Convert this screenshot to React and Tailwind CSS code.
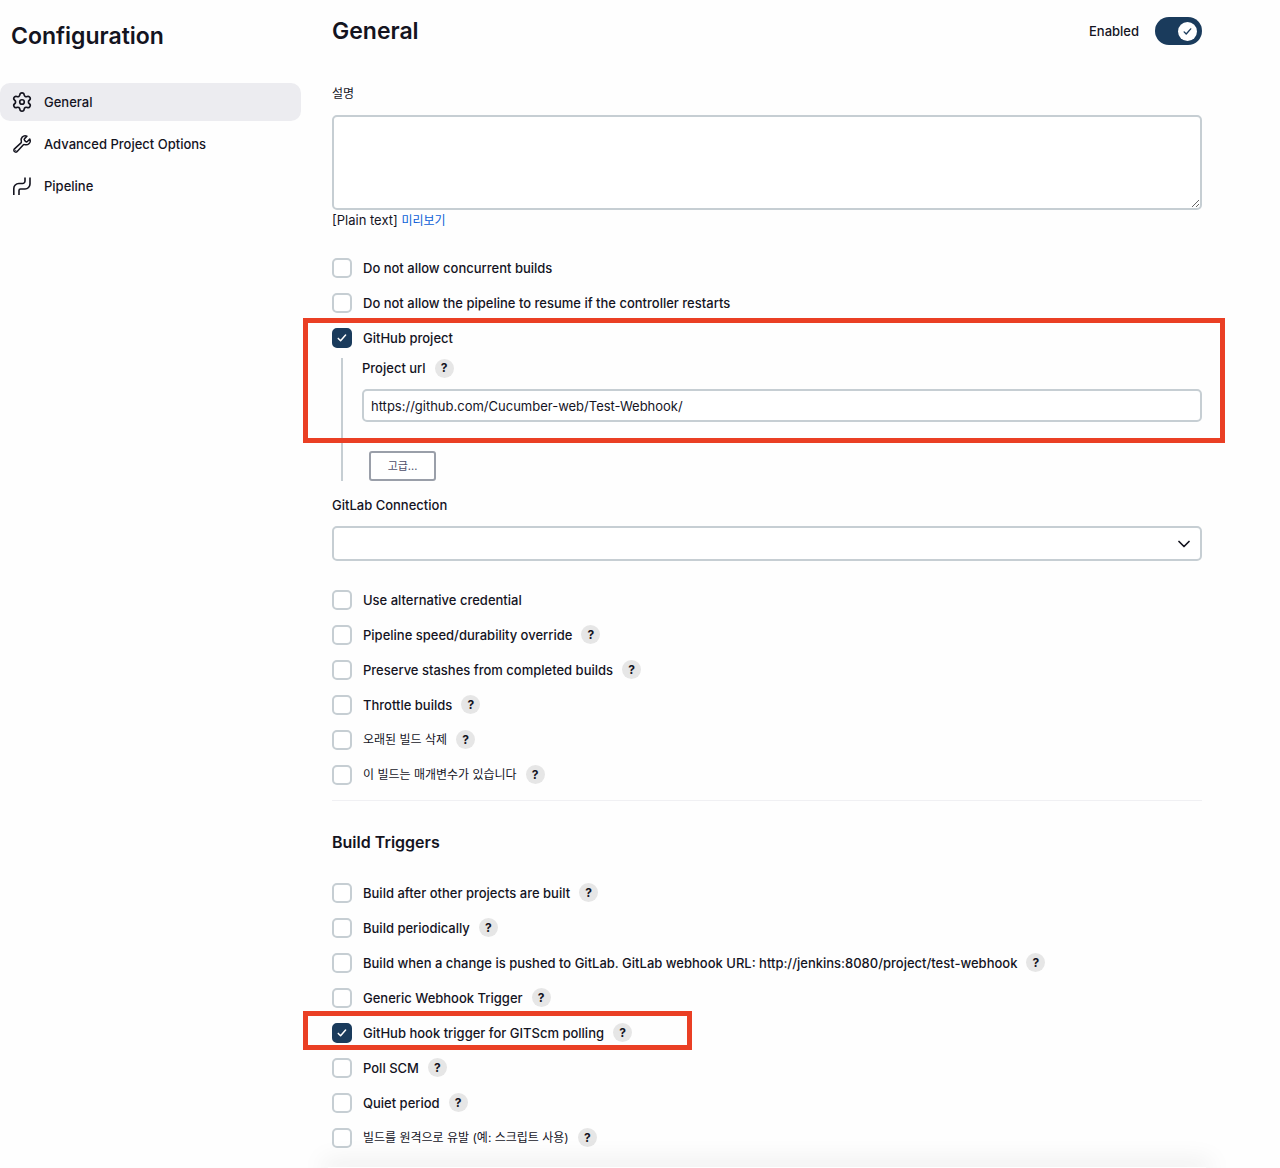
import { useState } from "react";
import { Settings } from "lucide-react";
import { IoBuildOutline } from "react-icons/io5";

const generalOptions = [
  { id: "alt-credential", label: "Use alternative credential" },
  { id: "durability", label: "Pipeline speed/durability override", help: true },
  { id: "stashes", label: "Preserve stashes from completed builds", help: true },
  { id: "throttle", label: "Throttle builds", help: true },
  { id: "discard", label: "오래된 빌드 삭제", help: true, korean: true },
  { id: "params", label: "이 빌드는 매개변수가 있습니다", help: true, korean: true },
];

const triggers = [
  { id: "after-other", label: "Build after other projects are built", help: true },
  { id: "periodic", label: "Build periodically", help: true },
  {
    id: "gitlab-push",
    label: "Build when a change is pushed to GitLab. GitLab webhook URL: http://jenkins:8080/project/test-webhook",
    help: true,
  },
  { id: "generic-webhook", label: "Generic Webhook Trigger", help: true },
  { id: "github-hook", label: "GitHub hook trigger for GITScm polling", help: true, checked: true, marked: true },
  { id: "poll-scm", label: "Poll SCM", help: true },
  { id: "quiet", label: "Quiet period", help: true },
  { id: "remote", label: "빌드를 원격으로 유발 (예: 스크립트 사용)", help: true, korean: true },
];

function GearIcon() {
  return <Settings strokeWidth={1.8} className="-mx-px h-[22px] w-[22px] [&_circle]:[r:2.5px]" />;
}

function WrenchIcon() {
  return <IoBuildOutline className="h-5 w-5 [&_path]:stroke-[38px]" />;
}

function PipelineIcon() {
  return (
    <svg viewBox="0 0 20 20" fill="none" stroke="currentColor" strokeWidth="1.6" className="h-5 w-5">
      <path d="M1.800 19v-6.500a5 5 0 0 1 5-5h3.700A2.500 2.500 0 0 0 13 5V1.500" />
      <path d="M7 19v-4.500A1.500 1.500 0 0 1 8.500 13H13a5 5 0 0 0 5-5V1.500" />
    </svg>
  );
}

function CheckMark({ className }) {
  return (
    <svg viewBox="0 0 12 12" fill="none" stroke="currentColor" strokeWidth="1.8" strokeLinecap="round" strokeLinejoin="round" className={className}>
      <path d="M1.500 6.500 4.300 9.300 10.300 2.500" />
    </svg>
  );
}

const navItems = [
  { name: "General", icon: GearIcon, active: true },
  { name: "Advanced Project Options", icon: WrenchIcon },
  { name: "Pipeline", icon: PipelineIcon },
];

function HelpButton({ topic }) {
  return (
    <button
      type="button"
      aria-label={`Help for ${topic}`}
      className="flex h-[19px] w-[19px] shrink-0 items-center justify-center rounded-full bg-[#e6e6e6] text-xs font-bold"
    >
      ?
    </button>
  );
}

function CheckRow({ id, label, help, korean, checked = false, marked }) {
  const [on, setOn] = useState(checked);

  return (
    <div className="relative flex min-h-[35px] items-center">
      <span className="grid h-5 w-5 shrink-0">
        <input
          id={id}
          type="checkbox"
          checked={on}
          onChange={(e) => setOn(e.target.checked)}
          className="peer col-start-1 row-start-1 h-5 w-5 appearance-none rounded-[5px] border-2 border-[#c6ced3] bg-white checked:border-[#1a3b5c] checked:bg-[#1a3b5c]"
        />
        <CheckMark className="pointer-events-none invisible col-start-1 row-start-1 h-2.5 w-2.5 place-self-center text-white peer-checked:visible" />
      </span>
      <label htmlFor={id} className={`pl-[11px] pr-[9px] ${korean ? "text-xs/5 font-normal" : ""}`}>{label}</label>
      {help && <HelpButton topic={label} />}
      {marked && (
        <div className="pointer-events-none absolute -left-[29px] -top-1 bottom-0 w-[389px] border-5 border-[#ea3f24]" />
      )}
    </div>
  );
}

function Sidebar() {
  return (
    <aside className="w-[301px] shrink-0 pt-5">
      <h1 className="pl-[11px] text-[23px]/8 font-semibold">Configuration</h1>
      <nav className="mt-[31px] flex flex-col gap-1">
        {navItems.map(({ name, icon: Icon, active }) => (
          <a
            key={name}
            href="#"
            className={`flex h-[38px] items-center gap-3 rounded-[10px] pl-3 ${active ? "bg-[#ececf0]" : "hover:bg-[#f4f4f7]"}`}
          >
            <Icon />
            {name}
          </a>
        ))}
      </nav>
    </aside>
  );
}

export default function App() {
  const [enabled, setEnabled] = useState(true);
  const [url, setUrl] = useState("https://github.com/Cucumber-web/Test-Webhook/");

  return (
    <div className="flex min-h-screen bg-[#fefefe] font-['Inter','Noto_Sans_CJK_KR',sans-serif] text-[13px]/5 font-medium text-[#14141f]">
      <Sidebar />

      <main className="flex min-w-0 flex-1 flex-col pl-[31px] pr-[78px] pt-4">
        <div className="flex h-[30px] items-center justify-between">
          <h2 className="text-[23px]/8 font-semibold">General</h2>
          <label className="flex items-center gap-4">
            Enabled
            <span className="grid h-7 w-[47px]">
              <input
                type="checkbox"
                role="switch"
                checked={enabled}
                onChange={(e) => setEnabled(e.target.checked)}
                className="peer col-start-1 row-start-1 appearance-none rounded-full bg-[#c6ced3] checked:bg-[#1a3b5c]"
              />
              <span className="pointer-events-none col-start-1 row-start-1 ml-[5px] flex h-[19px] w-[19px] items-center justify-center self-center rounded-full bg-white text-[#1a3b5c] peer-checked:ml-[23px]">
                <CheckMark className="h-[9px] w-[9px]" />
              </span>
            </span>
          </label>
        </div>

        <label htmlFor="description" className="mt-[38px] text-xs/5 font-normal">설명</label>
        <textarea
          id="description"
          className="mt-[11px] h-[95px] w-full shrink-0 resize-y rounded-[5px] border-2 border-[#c6ced3] bg-white p-2"
        />
        <div className="font-normal">
          [Plain text] <a href="#" className="text-xs text-[#0b5ed7]">미리보기</a>
        </div>

        <div className="mt-5">
          <CheckRow id="concurrent" label="Do not allow concurrent builds" />
          <CheckRow id="resume" label="Do not allow the pipeline to resume if the controller restarts" />
          <div className="relative">
            <CheckRow id="github" label="GitHub project" checked />
            <div className="ml-[9px] mt-[3px] border-l-2 border-[#c6ced3] pl-[19px]">
              <div className="flex items-center gap-[9px]">
                <label htmlFor="project-url">Project url</label>
                <HelpButton topic="Project url" />
              </div>
              <input
                id="project-url"
                type="text"
                value={url}
                onChange={(e) => setUrl(e.target.value)}
                className="mt-[11px] block h-[33px] w-full rounded-[5px] border-2 border-[#c6ced3] bg-white px-[7px] font-normal"
              />
              <button
                type="button"
                className="ml-[7px] mt-[29px] block h-[30px] w-[67px] rounded-[3px] border-2 border-[#9a9fa9] bg-white text-[11px] font-normal text-[#4d4d69]"
              >
                고급...
              </button>
            </div>
            <div className="pointer-events-none absolute -left-[29px] -right-[23px] -top-[2px] h-[125px] border-5 border-[#ea3f24]" />
          </div>
        </div>

        <label htmlFor="gitlab" className="mt-[14px]">GitLab Connection</label>
        <div className="mt-[11px] grid">
          <select
            id="gitlab"
            className="col-start-1 row-start-1 h-[35px] w-full appearance-none rounded-[5px] border-2 border-[#c6ced3] bg-white px-2"
          >
            <option value=""></option>
          </select>
          <svg
            viewBox="0 0 12 8"
            fill="none"
            stroke="currentColor"
            strokeWidth="1.7"
            strokeLinecap="round"
            strokeLinejoin="round"
            className="pointer-events-none col-start-1 row-start-1 mr-3 h-2 w-3 self-center justify-self-end"
          >
            <path d="M1 1.500 6 6.500 11 1.500" />
          </svg>
        </div>

        <div className="mt-[21px]">
          {generalOptions.map((opt) => (
            <CheckRow key={opt.id} {...opt} />
          ))}
        </div>

        <hr className="mt-2 border-[#f0f0f3]" />

        <h3 className="mt-[29px] text-base/6 font-semibold">Build Triggers</h3>
        <div className="mt-[21px]">
          {triggers.map((opt) => (
            <CheckRow key={opt.id} {...opt} />
          ))}
        </div>

        {/* top edge shadow of the save bar */}
        <div className="pointer-events-none sticky bottom-0 -mx-1 mt-auto h-px shadow-[0_0_25px_5px_rgba(0,0,0,0.1)]" />
      </main>
    </div>
  );
}
